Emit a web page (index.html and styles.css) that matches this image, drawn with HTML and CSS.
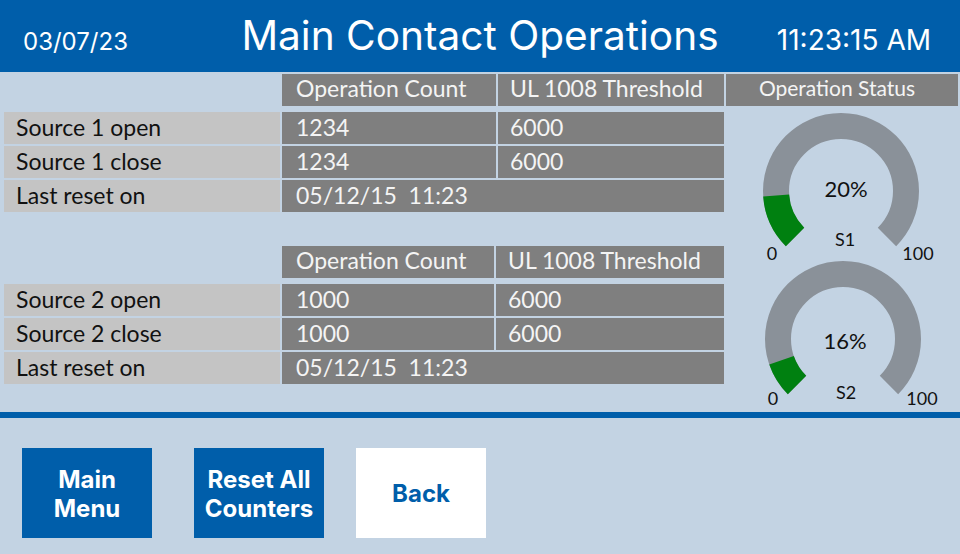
FILE: index.html
```html
<!DOCTYPE html>
<html lang="en">
<head>
<meta charset="utf-8">
<title>Main Contact Operations</title>
<link rel="stylesheet" href="styles.css">
</head>
<body>
<div class="screen">
  <header class="topbar">
    <div class="date">03/07/23</div>
    <h1 class="title">Main Contact Operations</h1>
    <div class="time">11:23:15 AM</div>
  </header>

  <main class="content">
    <div class="tables">
      <section class="grid">
        <div class="blank"></div>
        <div class="hcell">Operation Count</div>
        <div class="hcell">UL 1008 Threshold</div>

        <div class="label">Source 1 open</div>
        <div class="value">1234</div>
        <div class="value">6000</div>

        <div class="label">Source 1 close</div>
        <div class="value">1234</div>
        <div class="value">6000</div>

        <div class="label">Last reset on</div>
        <div class="value wide">05/12/15&nbsp;&nbsp;11:23</div>
      </section>

      <section class="grid second">
        <div class="blank"></div>
        <div class="hcell">Operation Count</div>
        <div class="hcell">UL 1008 Threshold</div>

        <div class="label">Source 2 open</div>
        <div class="value">1000</div>
        <div class="value">6000</div>

        <div class="label">Source 2 close</div>
        <div class="value">1000</div>
        <div class="value">6000</div>

        <div class="label">Last reset on</div>
        <div class="value wide">05/12/15&nbsp;&nbsp;11:23</div>
      </section>
    </div>

    <aside class="status">
      <div class="status-head">Operation Status</div>
      <svg class="gauges" width="232" height="306" viewBox="0 0 232 306">
        <!-- Gauge S1 -->
        <path class="ring" d="M 69.04 130.96 A 65 65 0 1 1 160.96 130.96"/>
        <path class="fill" d="M 69.04 130.96 A 65 65 0 0 1 50.16 89.53"/>
        <text class="pct" x="120" y="91">20%</text>
        <text class="lbl" x="119" y="140">S1</text>
        <text class="lbl" x="46" y="154">0</text>
        <text class="lbl" x="192" y="154">100</text>

        <!-- Gauge S2 -->
        <path class="ring" d="M 71.04 278.96 A 65 65 0 1 1 162.96 278.96"/>
        <path class="fill" d="M 71.04 278.96 A 65 65 0 0 1 55.54 254.16"/>
        <text class="pct" x="119" y="243">16%</text>
        <text class="lbl" x="120" y="293">S2</text>
        <text class="lbl" x="47" y="299">0</text>
        <text class="lbl" x="196" y="299">100</text>
      </svg>
    </aside>
  </main>

  <div class="divider"></div>

  <footer class="actions">
    <button class="btn primary first">Main<br>Menu</button>
    <button class="btn primary">Reset All<br>Counters</button>
    <button class="btn light">Back</button>
  </footer>
</div>
</body>
</html>
```

FILE: styles.css
```css
html, body {
  margin: 0;
  padding: 0;
}

body {
  background: #c3d3e3;
  font-family: Lato, "Open Sans", sans-serif;
}

.screen {
  width: 960px;
  height: 554px;
  overflow: hidden;
  background: #c3d3e3;
  display: flex;
  flex-direction: column;
}

/* Header */
.topbar {
  height: 72px;
  flex: 0 0 72px;
  background: #005eaa;
  color: #ffffff;
  display: grid;
  grid-template-columns: 1fr auto 1fr;
  align-items: baseline;
  font-family: Inter, Roboto, sans-serif;
}

.date {
  padding-left: 23px;
  font-size: 24px;
}

.time {
  text-align: right;
  font-size: 28px;
  padding-right: 29px;
}

.title {
  margin: 0;
  font-size: 40.6px;
  font-weight: 400;
  line-height: 72px;
  white-space: nowrap;
}

/* Content */
.content {
  height: 340px;
  flex: 0 0 340px;
  display: flex;
  padding: 2px 0 0 4px;
  box-sizing: border-box;
}

.tables {
  width: 720px;
}

.grid {
  display: grid;
  grid-template-columns: 276px 214px 226px;
  grid-template-rows: 36px;
  grid-auto-rows: 32px;
  column-gap: 2px;
  row-gap: 2px;
  font-size: 23px;
  line-height: 30px;
}

.grid.second {
  grid-template-columns: 276px 212px 228px;
  margin-top: 34px;
}

.hcell,
.value {
  background: #7f7f7f;
  color: #f4f4f4;
  padding-left: 12px;
  white-space: nowrap;
}

.hcell {
  height: 32px;
  line-height: 28px;
  align-self: start;
}

.grid > .hcell:nth-child(2),
.grid > .value:nth-child(3n+2) {
  padding-left: 14px;
}

.label {
  background: #c4c4c4;
  color: #111111;
  padding-left: 12px;
  white-space: nowrap;
}

.value.wide {
  grid-column: 2 / 4;
}

/* Status column */
.status {
  width: 232px;
  margin-left: 2px;
  display: flex;
  flex-direction: column;
}

.status-head {
  height: 32px;
  background: #7f7f7f;
  color: #f4f4f4;
  font-size: 21px;
  line-height: 27px;
  text-align: center;
  padding-right: 10px;
}

.gauges {
  display: block;
}

.ring {
  fill: none;
  stroke: #8a9199;
  stroke-width: 26;
}

.fill {
  fill: none;
  stroke: #008010;
  stroke-width: 26;
}

.pct {
  font-family: Lato, "Open Sans", sans-serif;
  font-size: 22px;
  fill: #111111;
  text-anchor: middle;
}

.lbl {
  font-family: Lato, "Open Sans", sans-serif;
  font-size: 18px;
  fill: #111111;
  text-anchor: middle;
}

/* Divider */
.divider {
  height: 6px;
  flex: 0 0 6px;
  background: #005eaa;
}

/* Buttons */
.actions {
  display: flex;
  gap: 32px;
  padding: 30px 0 0 22px;
}

.btn {
  width: 130px;
  height: 90px;
  border: none;
  margin: 0;
  padding: 1px 0 0 0;
  font-family: Inter, Roboto, sans-serif;
  font-weight: 700;
  font-size: 24px;
  line-height: 29px;
  cursor: pointer;
}

.btn.first {
  margin-right: 10px;
}

.btn.primary {
  background: #005eaa;
  color: #ffffff;
}

.btn.light {
  background: #ffffff;
  color: #005eaa;
}
```
